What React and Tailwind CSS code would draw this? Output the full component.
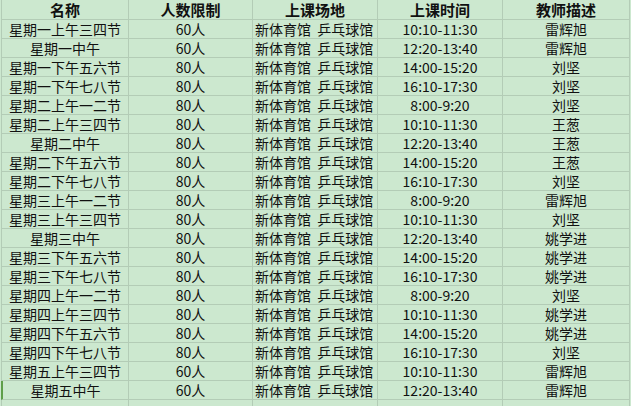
import React from "react";

const rows = [
  ["星期一上午三四节", "60人", "10:10-11:30", "雷辉旭"],
  ["星期一中午", "60人", "12:20-13:40", "雷辉旭"],
  ["星期一下午五六节", "80人", "14:00-15:20", "刘坚"],
  ["星期一下午七八节", "80人", "16:10-17:30", "刘坚"],
  ["星期二上午一二节", "80人", "8:00-9:20", "刘坚"],
  ["星期二上午三四节", "80人", "10:10-11:30", "王葱"],
  ["星期二中午", "80人", "12:20-13:40", "王葱"],
  ["星期二下午五六节", "80人", "14:00-15:20", "王葱"],
  ["星期二下午七八节", "80人", "16:10-17:30", "刘坚"],
  ["星期三上午一二节", "80人", "8:00-9:20", "雷辉旭"],
  ["星期三上午三四节", "80人", "10:10-11:30", "刘坚"],
  ["星期三中午", "80人", "12:20-13:40", "姚学进"],
  ["星期三下午五六节", "80人", "14:00-15:20", "姚学进"],
  ["星期三下午七八节", "80人", "16:10-17:30", "姚学进"],
  ["星期四上午一二节", "80人", "8:00-9:20", "刘坚"],
  ["星期四上午三四节", "80人", "10:10-11:30", "姚学进"],
  ["星期四下午五六节", "80人", "14:00-15:20", "姚学进"],
  ["星期四下午七八节", "80人", "16:10-17:30", "刘坚"],
  ["星期五上午三四节", "60人", "10:10-11:30", "雷辉旭"],
  ["星期五中午", "60人", "12:20-13:40", "雷辉旭"],
];

const headers = ["名称", "人数限制", "上课场地", "上课时间", "教师描述"];

const cell = "border-r border-b border-[#b3ccb6] flex items-center overflow-hidden whitespace-pre";

export default function App() {
  return (
    <div
      className="w-[631px] h-[406px] overflow-hidden bg-[#cce8cf] text-[#111]"
      style={{ fontFamily: '"Noto Sans CJK SC", "Noto Sans", sans-serif' }}
    >
      <div className="ml-px border-l border-[#b3ccb6] grid grid-cols-[127px_124px_125px_125px_127px]">
        {/* header */}
        {headers.map((h) => (
          <div key={h} className={`${cell} h-[20px] justify-center text-[15px] font-bold leading-none`}>
            {h}
          </div>
        ))}

        {/* data rows */}
        {rows.map((r, i) => (
          <React.Fragment key={i}>
            <div
              className={`${cell} h-[19px] justify-center text-[14px] leading-none ${
                i === rows.length - 1 ? "border-l-2 border-l-[#5f9e4a] -ml-px" : ""
              }`}
            >
              {r[0]}
            </div>
            <div className={`${cell} h-[19px] justify-center text-[14px] leading-none`}>{r[1]}</div>
            <div className={`${cell} h-[19px] justify-start pl-[2px] text-[14px] leading-none`}>
              {"新体育馆  乒乓球馆"}
            </div>
            <div className={`${cell} h-[19px] justify-center text-[14px] leading-none`}>{r[2]}</div>
            <div className={`${cell} h-[19px] justify-center text-[14px] leading-none`}>{r[3]}</div>
          </React.Fragment>
        ))}

        {/* partial row at the bottom */}
        {headers.map((h) => (
          <div key={"e" + h} className={`${cell} h-[19px]`} />
        ))}
      </div>
    </div>
  );
}
